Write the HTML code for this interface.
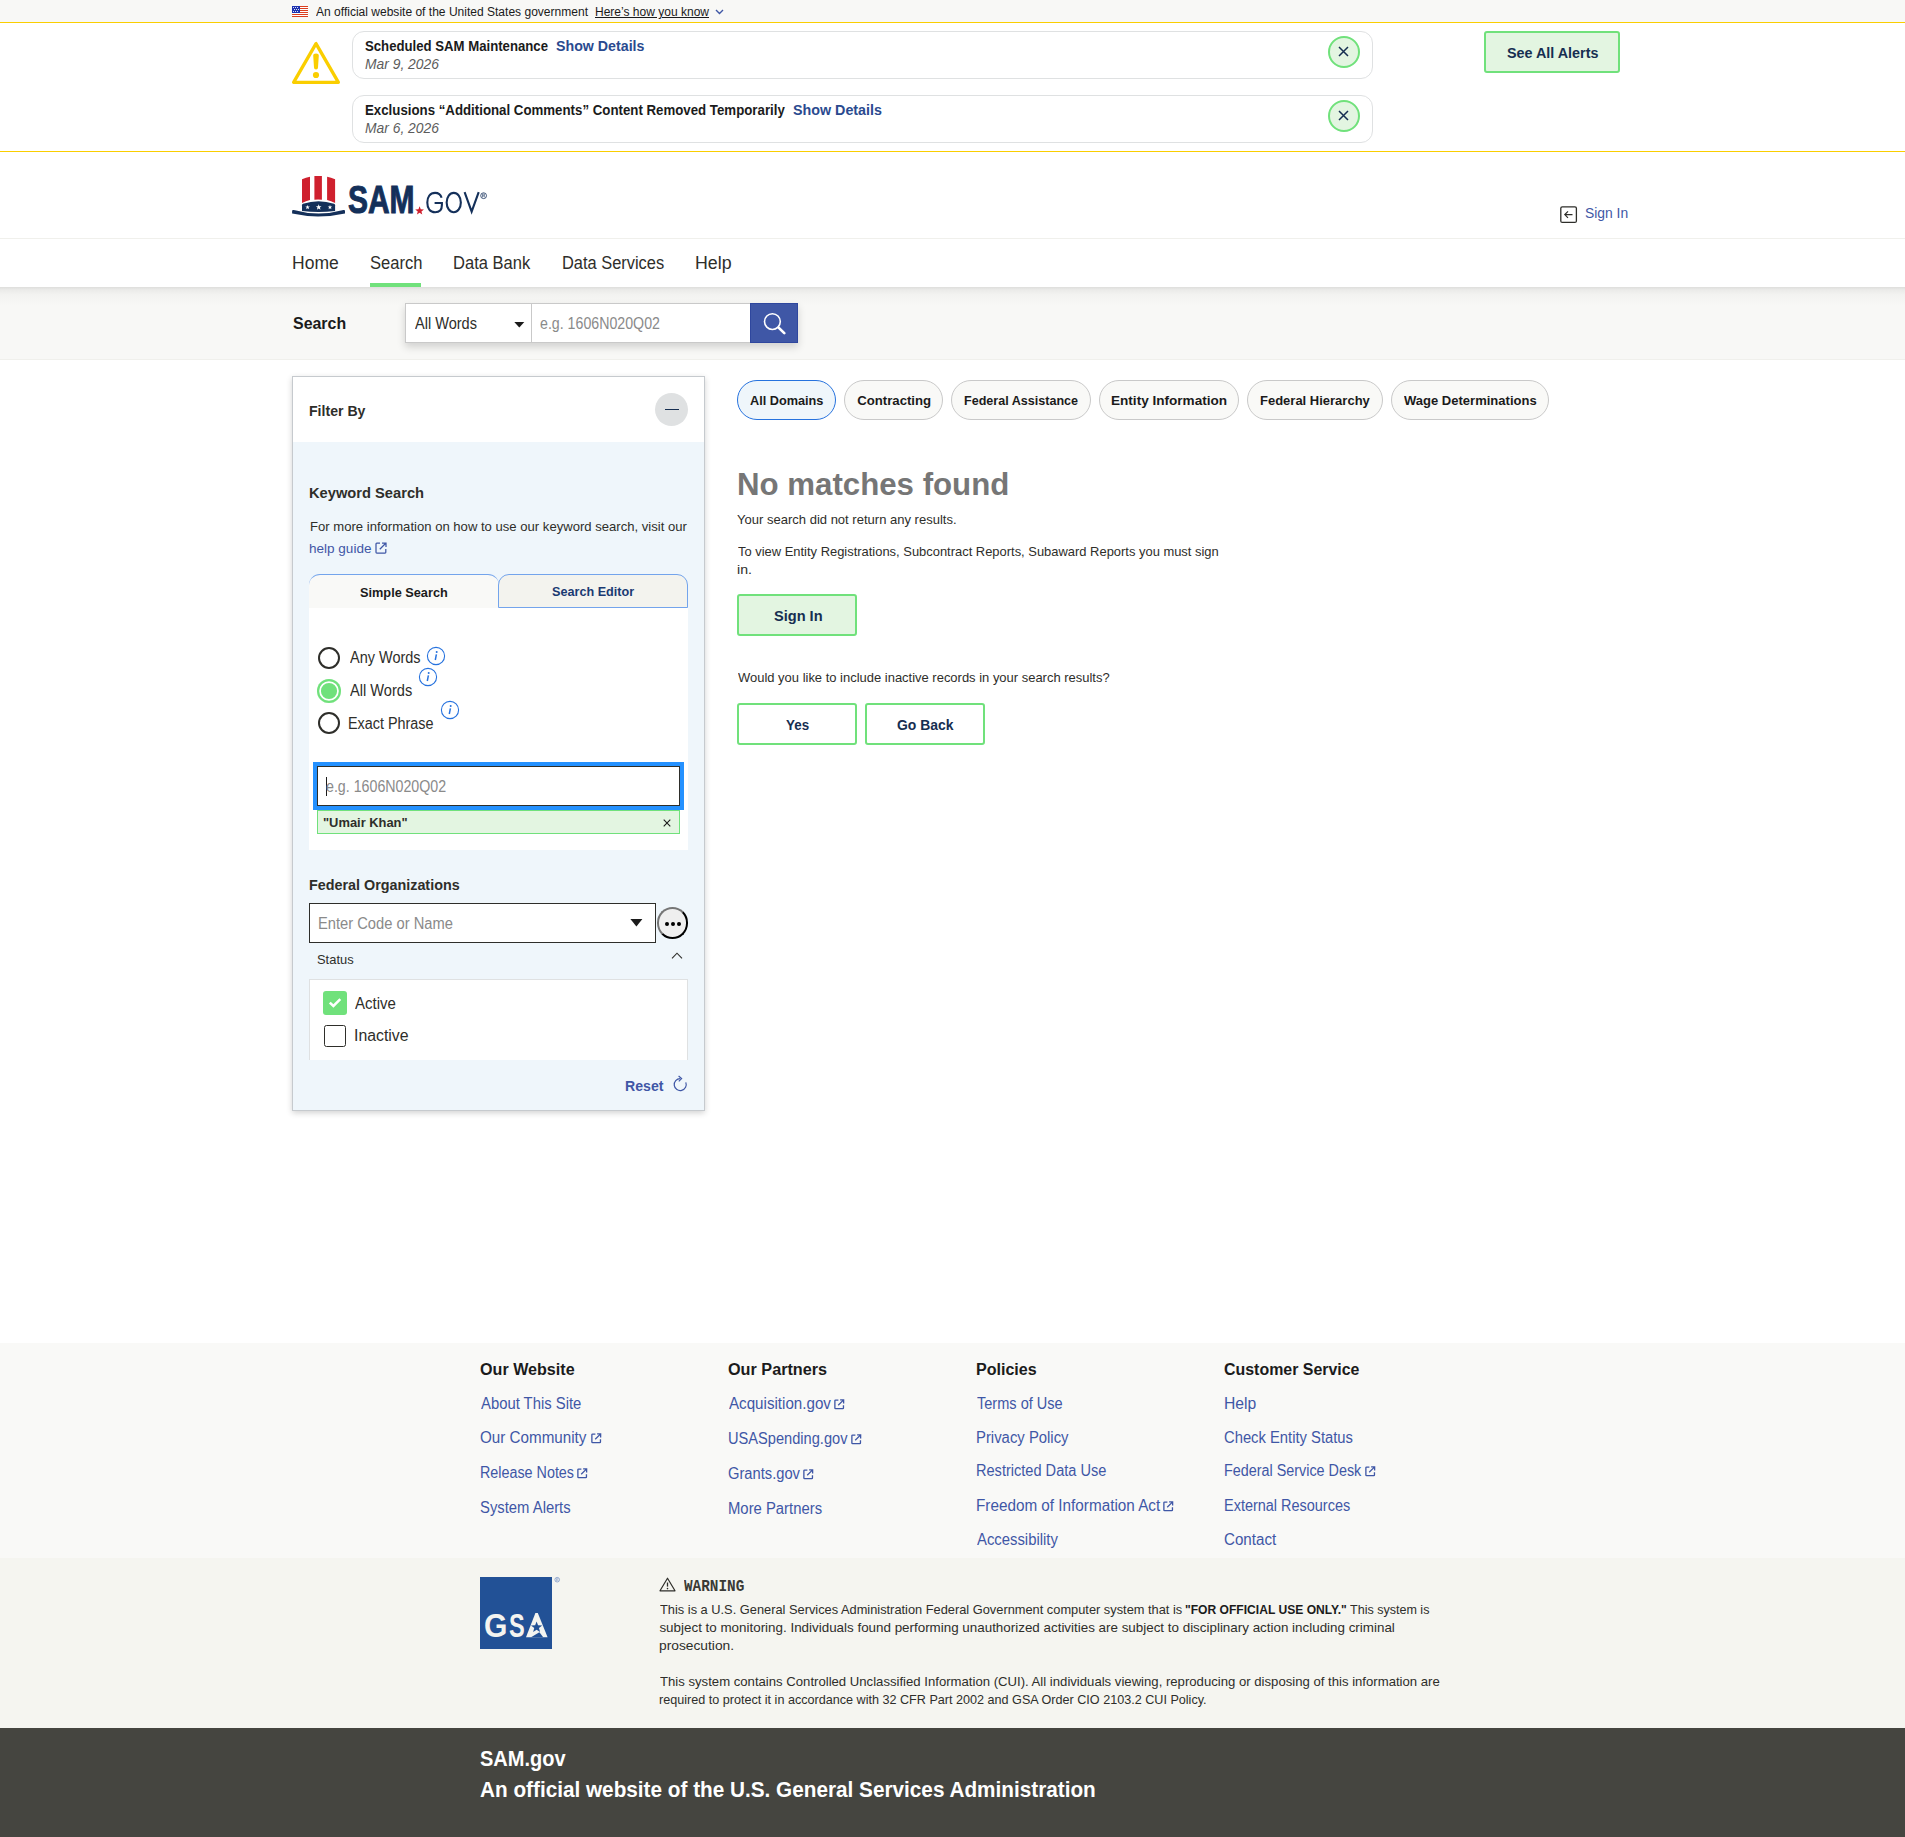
<!DOCTYPE html>
<html lang="en"><head><meta charset="utf-8"><title>SAM.gov | Search</title>
<style>
html,body{margin:0;padding:0}
body{width:1905px;height:1837px;position:relative;overflow:hidden;background:#fff;font-family:"Liberation Sans",sans-serif;}
.t{position:absolute;white-space:pre;line-height:normal;transform-origin:0 0;display:block}
.b{position:absolute;box-sizing:border-box}
svg{position:absolute;overflow:visible}
</style></head>
<body>
<div class="b" style="left:0;top:0;width:1905px;height:22px;background:#f8f8f6"></div>
<svg style="left:292px;top:6px" width="16" height="11" viewBox="0 0 16 11"><rect width="16" height="11" fill="#fff"/><rect x="0" y="0" width="16" height="1" fill="#db3e1f"/><rect x="0" y="2" width="16" height="1" fill="#db3e1f"/><rect x="0" y="4" width="16" height="1" fill="#db3e1f"/><rect x="0" y="6" width="16" height="1" fill="#db3e1f"/><rect x="0" y="8" width="16" height="1" fill="#db3e1f"/><rect x="0" y="10" width="16" height="1" fill="#db3e1f"/><rect x="0" y="0" width="8" height="7" fill="#1e33b1"/><circle cx="1.5" cy="1.5" r="0.55" fill="#fff"/><circle cx="3.5" cy="1.5" r="0.55" fill="#fff"/><circle cx="5.5" cy="1.5" r="0.55" fill="#fff"/><circle cx="2.5" cy="3.5" r="0.55" fill="#fff"/><circle cx="4.5" cy="3.5" r="0.55" fill="#fff"/><circle cx="6.5" cy="3.5" r="0.55" fill="#fff"/><circle cx="1.5" cy="5.5" r="0.55" fill="#fff"/><circle cx="3.5" cy="5.5" r="0.55" fill="#fff"/><circle cx="5.5" cy="5.5" r="0.55" fill="#fff"/></svg>
<span class="t" style="left:316.10px;top:3px;line-height:18px;font-size:12.3px;color:#1b1b1b;transform:scaleX(0.9785);">An official website of the United States government</span>
<span class="t" style="left:594.94px;top:3px;line-height:18px;font-size:12.3px;color:#1b1b1b;text-decoration:underline;transform:scaleX(0.9772);">Here’s how you know</span>
<svg style="left:715px;top:9px" width="9" height="6" viewBox="0 0 9 6"><path d="M1 1 L4.5 4.5 L8 1" fill="none" stroke="#3f57a6" stroke-width="1.4"/></svg>
<div class="b" style="left:0;top:22px;width:1905px;height:130px;background:#fff;border-top:1.5px solid #face00;border-bottom:1.5px solid #face00"></div>
<svg style="left:288px;top:38px" width="56" height="50" viewBox="288 38 56 50"><path d="M316 43.6 L293.6 82.3 L338.4 82.3 Z" fill="none" stroke="#face00" stroke-width="3.3" stroke-linejoin="round"/><path d="M313.2 55.6 a2.8 2.2 0 0 1 5.6 0 L318 67.5 a2 2 0 0 1 -4 0 Z" fill="#face00"/><circle cx="316" cy="75" r="3.1" fill="#face00"/></svg>
<div class="b" style="left:352px;top:31px;width:1021px;height:48px;border:1px solid #dfe1e2;border-radius:12px;background:#fff"></div>
<span class="t" style="left:365.44px;top:36px;line-height:20px;font-size:14.8px;color:#1b1b1b;font-weight:700;transform:scaleX(0.8902);">Scheduled SAM Maintenance</span>
<span class="t" style="left:556.41px;top:36px;line-height:20px;font-size:14.8px;color:#2a4a8f;font-weight:700;transform:scaleX(0.9602);">Show Details</span>
<span class="t" style="left:365.38px;top:54px;line-height:20px;font-size:14.8px;color:#5c5c5c;font-style:italic;transform:scaleX(0.9357);">Mar 9, 2026</span>
<div class="b" style="left:1327.5px;top:36px;width:32px;height:32px;border-radius:50%;border:2px solid #70e17b;background:#e3f5e1"></div>
<svg style="left:1338px;top:45.7px" width="11" height="11" viewBox="0 0 11 11"><path d="M1 1 L10 10 M10 1 L1 10" stroke="#162e51" stroke-width="1.5" fill="none"/></svg>
<div class="b" style="left:352px;top:95px;width:1021px;height:48px;border:1px solid #dfe1e2;border-radius:12px;background:#fff"></div>
<span class="t" style="left:364.94px;top:100px;line-height:20px;font-size:14.8px;color:#1b1b1b;font-weight:700;transform:scaleX(0.8963);">Exclusions “Additional Comments” Content Removed Temporarily</span>
<span class="t" style="left:792.91px;top:100px;line-height:20px;font-size:14.8px;color:#2a4a8f;font-weight:700;transform:scaleX(0.9656);">Show Details</span>
<span class="t" style="left:365.38px;top:118px;line-height:20px;font-size:14.8px;color:#5c5c5c;font-style:italic;transform:scaleX(0.9357);">Mar 6, 2026</span>
<div class="b" style="left:1327.5px;top:100px;width:32px;height:32px;border-radius:50%;border:2px solid #70e17b;background:#e3f5e1"></div>
<svg style="left:1338px;top:109.7px" width="11" height="11" viewBox="0 0 11 11"><path d="M1 1 L10 10 M10 1 L1 10" stroke="#162e51" stroke-width="1.5" fill="none"/></svg>
<div class="b" style="left:1484px;top:31px;width:136px;height:41.5px;border:2px solid #70e17b;background:#e3f5e1;border-radius:3px"></div>
<span class="t" style="left:1506.91px;top:43px;line-height:20px;font-size:14.8px;color:#162e51;font-weight:700;transform:scaleX(0.9695);">See All Alerts</span>
<div class="b" style="left:0;top:237.5px;width:1905px;height:1px;background:#f0f0ec"></div>
<svg style="left:1560px;top:206px" width="18" height="18" viewBox="0 0 18 18"><rect x="0.8" y="0.8" width="15.6" height="15.6" rx="1.5" fill="none" stroke="#2e2e2a" stroke-width="1.3"/><path d="M12.5 8.6 H5 M8 5.4 L4.8 8.6 L8 11.8" fill="none" stroke="#2e2e2a" stroke-width="1.2"/></svg>
<span class="t" style="left:1585.48px;top:203px;line-height:20px;font-size:14.8px;color:#3f57a6;transform:scaleX(0.9376);">Sign In</span>
<span class="t" style="left:292.10px;top:251px;line-height:24px;font-size:17.5px;color:#2e2e2a;">Home</span>
<span class="t" style="left:370.05px;top:251px;line-height:24px;font-size:17.5px;color:#2e2e2a;transform:scaleX(0.9468);">Search</span>
<span class="t" style="left:453.28px;top:251px;line-height:24px;font-size:17.5px;color:#2e2e2a;transform:scaleX(0.9444);">Data Bank</span>
<span class="t" style="left:562.39px;top:251px;line-height:24px;font-size:17.5px;color:#2e2e2a;transform:scaleX(0.9371);">Data Services</span>
<span class="t" style="left:695.18px;top:251px;line-height:24px;font-size:17.5px;color:#2e2e2a;transform:scaleX(1.0159);">Help</span>
<div class="b" style="left:370px;top:283px;width:51px;height:4px;background:#70e17b"></div>
<div class="b" style="left:0;top:287px;width:1905px;height:72.5px;background:linear-gradient(to bottom,#dededc 0,#ebebe9 3px,#f3f3f1 8px,#f8f8f6 18px,#f8f8f6 100%);border-bottom:1px solid #f0f0ec"></div>
<span class="t" style="left:293.06px;top:312px;line-height:23px;font-size:16.8px;color:#1b1b1b;font-weight:700;transform:scaleX(0.9494);">Search</span>
<div class="b" style="left:405px;top:303px;width:393px;height:40px;box-shadow:0 4px 8px rgba(0,0,0,.16)"></div>
<div class="b" style="left:405px;top:303px;width:126.5px;height:40px;background:#fff;border:1px solid #c9c9c9"></div>
<div class="b" style="left:530.5px;top:303px;width:220px;height:40px;background:#fff;border:1px solid #c9c9c9"></div>
<span class="t" style="left:415.10px;top:313px;line-height:21px;font-size:15.6px;color:#2e2e2a;transform:scaleX(0.9331);">All Words</span>
<svg style="left:513.6px;top:321.6px" width="11" height="6" viewBox="0 0 11 6"><path d="M0.3 0 H10.3 L5.3 5.6 Z" fill="#1b1b1b"/></svg>
<span class="t" style="left:540.30px;top:313px;line-height:21px;font-size:15.6px;color:#8a8a8a;transform:scaleX(0.9102);">e.g. 1606N020Q02</span>
<div class="b" style="left:750px;top:303px;width:48px;height:40px;background:#3f57a6;border:1px solid #2f479e"></div>
<svg style="left:760px;top:310px" width="28" height="28" viewBox="760 310 28 28"><circle cx="772.4" cy="321.6" r="7.9" fill="none" stroke="#fff" stroke-width="1.6"/><path d="M778.6 327.6 L784.3 333.1" stroke="#fff" stroke-width="2.7" stroke-linecap="round"/></svg>
<div class="b" style="left:292px;top:375.7px;width:413px;height:735.3px;background:#eff6fb;border:1px solid #c6cace;box-shadow:0 2px 6px rgba(0,0,0,.18)"></div>
<div class="b" style="left:293px;top:376.7px;width:411px;height:65.3px;background:#fff"></div>
<span class="t" style="left:308.88px;top:401px;line-height:20px;font-size:14.8px;color:#2e2e2a;font-weight:700;transform:scaleX(0.9536);">Filter By</span>
<div class="b" style="left:655px;top:393px;width:33px;height:33px;border-radius:50%;background:#dfe1e2"></div>
<div class="b" style="left:664.5px;top:408.6px;width:14px;height:1.4px;background:#162e51"></div>
<span class="t" style="left:308.85px;top:483px;line-height:20px;font-size:14.8px;color:#2e2e2a;font-weight:700;transform:scaleX(0.9920);">Keyword Search</span>
<span class="t" style="left:309.55px;top:517px;line-height:19px;font-size:13.4px;color:#2e2e2a;transform:scaleX(0.9776);">For more information on how to use our keyword search, visit our</span>
<span class="t" style="left:308.89px;top:539px;line-height:19px;font-size:13.4px;color:#3f57a6;transform:scaleX(1.0105);">help guide</span>
<svg style="left:374.8px;top:542.3px" width="12" height="12" viewBox="0 0 12 12"><path d="M5 1.2 H1.8 a0.8 0.8 0 0 0 -0.8 0.8 V10.2 a0.8 0.8 0 0 0 0.8 0.8 H10 a0.8 0.8 0 0 0 0.8 -0.8 V7" fill="none" stroke="#3f57a6" stroke-width="1.25"/><path d="M7 1 H11 V5 M11 1 L4.8 7.2" fill="none" stroke="#3f57a6" stroke-width="1.25"/></svg>
<div class="b" style="left:309px;top:574px;width:189.5px;height:34.2px;background:#f9f9f7;border-top:1px solid #73a4ec;border-radius:11px 11px 0 0"></div>
<div class="b" style="left:498.2px;top:574px;width:189.8px;height:34px;background:#f3f3ee;border:1px solid #73a4ec;border-radius:11px 11px 0 0"></div>
<span class="t" style="left:359.95px;top:583px;line-height:19px;font-size:13.4px;color:#1b1b1b;font-weight:700;transform:scaleX(0.9508);">Simple Search</span>
<span class="t" style="left:552.35px;top:582px;line-height:19px;font-size:13.4px;color:#1a3a72;font-weight:700;transform:scaleX(0.9438);">Search Editor</span>
<div class="b" style="left:309px;top:608px;width:379px;height:241.5px;background:#fff"></div>
<div class="b" style="left:318px;top:647px;width:22px;height:22px;border-radius:50%;background:#fff;border:2px solid #2e2e2a"></div>
<div class="b" style="left:317px;top:679px;width:24px;height:24px;border-radius:50%;background:#70e17b;box-shadow:inset 0 0 0 2.2px #70e17b, inset 0 0 0 3.9px #fff"></div>
<div class="b" style="left:318px;top:712px;width:22px;height:22px;border-radius:50%;background:#fff;border:2px solid #2e2e2a"></div>
<span class="t" style="left:349.60px;top:647px;line-height:21px;font-size:15.6px;color:#2e2e2a;transform:scaleX(0.9289);">Any Words</span>
<span class="t" style="left:349.60px;top:680px;line-height:21px;font-size:15.6px;color:#2e2e2a;transform:scaleX(0.9361);">All Words</span>
<span class="t" style="left:348.45px;top:713px;line-height:21px;font-size:15.6px;color:#2e2e2a;transform:scaleX(0.9215);">Exact Phrase</span>
<svg style="left:426.1px;top:646px" width="20" height="20" viewBox="0 0 20 20"><circle cx="10" cy="10" r="8.6" fill="none" stroke="#2672de" stroke-width="1.1"/><circle cx="10.7" cy="6" r="1" fill="#2672de"/><path d="M10.4 8.4 L9.3 14" stroke="#2672de" stroke-width="1.5" fill="none"/></svg>
<svg style="left:418px;top:667.2px" width="20" height="20" viewBox="0 0 20 20"><circle cx="10" cy="10" r="8.6" fill="none" stroke="#2672de" stroke-width="1.1"/><circle cx="10.7" cy="6" r="1" fill="#2672de"/><path d="M10.4 8.4 L9.3 14" stroke="#2672de" stroke-width="1.5" fill="none"/></svg>
<svg style="left:440px;top:700px" width="20" height="20" viewBox="0 0 20 20"><circle cx="10" cy="10" r="8.6" fill="none" stroke="#2672de" stroke-width="1.1"/><circle cx="10.7" cy="6" r="1" fill="#2672de"/><path d="M10.4 8.4 L9.3 14" stroke="#2672de" stroke-width="1.5" fill="none"/></svg>
<div class="b" style="left:313px;top:762px;width:371px;height:48px;background:#fff;border:4px solid #2491ff"></div>
<div class="b" style="left:317px;top:766px;width:363px;height:40px;border:1px solid #2e2e2a"></div>
<div class="b" style="left:325.8px;top:776.5px;width:1px;height:19px;background:#1b1b1b"></div>
<span class="t" style="left:326.30px;top:776px;line-height:21px;font-size:15.6px;color:#8a8a8a;transform:scaleX(0.9117);">e.g. 1606N020Q02</span>
<div class="b" style="left:317px;top:810px;width:363px;height:24px;background:#e3f5e1;border:1px solid #70e17b"></div>
<span class="t" style="left:322.96px;top:813px;line-height:19px;font-size:13.4px;color:#2e2e2a;font-weight:700;transform:scaleX(0.9629);">"Umair Khan"</span>
<svg style="left:663px;top:819px" width="8" height="8" viewBox="0 0 8 8"><path d="M0.7 0.7 L7.3 7.3 M7.3 0.7 L0.7 7.3" stroke="#1b1b1b" stroke-width="1.1" fill="none"/></svg>
<span class="t" style="left:308.87px;top:875px;line-height:20px;font-size:14.8px;color:#2e2e2a;font-weight:700;transform:scaleX(0.9693);">Federal Organizations</span>
<div class="b" style="left:309px;top:903.3px;width:347px;height:39.5px;background:#fff;border:1px solid #2e2e2a"></div>
<span class="t" style="left:317.72px;top:913px;line-height:21px;font-size:15.6px;color:#8a8a8a;transform:scaleX(0.9430);">Enter Code or Name</span>
<svg style="left:629.5px;top:919px" width="13" height="8" viewBox="0 0 13 8"><path d="M0.4 0 H12.4 L6.4 7.6 Z" fill="#1b1b1b"/></svg>
<div class="b" style="left:656.9px;top:907.2px;width:31px;height:31.4px;border-radius:50%;background:#efefef;border:2px solid;border-color:#767676 #000 #000 #767676"></div>
<div class="b" style="left:665.35px;top:922.25px;width:3.9px;height:3.9px;border-radius:50%;background:#000"></div>
<div class="b" style="left:671.25px;top:922.25px;width:3.9px;height:3.9px;border-radius:50%;background:#000"></div>
<div class="b" style="left:677.15px;top:922.25px;width:3.9px;height:3.9px;border-radius:50%;background:#000"></div>
<span class="t" style="left:317.12px;top:950px;line-height:19px;font-size:13.4px;color:#2e2e2a;transform:scaleX(0.9643);">Status</span>
<svg style="left:671px;top:951.5px" width="12" height="7" viewBox="0 0 12 7"><path d="M1 6.3 L6 1.2 L11 6.3" fill="none" stroke="#2e2e2a" stroke-width="1.1"/></svg>
<div class="b" style="left:309px;top:979px;width:379px;height:81px;background:#fff;border:1.5px solid #dfe1e2;border-bottom:none"></div>
<div class="b" style="left:323px;top:991px;width:24px;height:24px;border-radius:3px;background:#70e17b"></div>
<svg style="left:323px;top:991px" width="24" height="24" viewBox="0 0 24 24"><path d="M6.8 11.6 L10.4 15 L17.3 8.2" fill="none" stroke="#fff" stroke-width="2.5"/></svg>
<span class="t" style="left:355.30px;top:993px;line-height:21px;font-size:15.6px;color:#2e2e2a;transform:scaleX(0.9615);">Active</span>
<div class="b" style="left:324px;top:1025px;width:22px;height:22px;border-radius:2.5px;background:#fff;border:1.5px solid #2e2e2a"></div>
<span class="t" style="left:353.87px;top:1025px;line-height:21px;font-size:15.6px;color:#2e2e2a;transform:scaleX(1.0160);">Inactive</span>
<span class="t" style="left:624.78px;top:1076px;line-height:20px;font-size:14.8px;color:#3f57a6;font-weight:700;transform:scaleX(0.9545);">Reset</span>
<svg style="left:672px;top:1075px" width="16" height="18" viewBox="0 0 16 18"><path d="M8.2 3.6 A6 6 0 1 0 13.8 7.4" fill="none" stroke="#3f57a6" stroke-width="1.2"/><path d="M6.6 1 L9.6 3.6 L6.8 6.4" fill="none" stroke="#3f57a6" stroke-width="1.2"/></svg>
<div class="b" style="left:737px;top:380px;width:98.5px;height:39.5px;border-radius:20px;background:#eff6fb;border:1px solid #2672de"></div>
<span class="t" style="left:750.28px;top:391px;line-height:19px;font-size:13.2px;color:#1b1b1b;font-weight:700;transform:scaleX(0.9637);">All Domains</span>
<div class="b" style="left:844.2px;top:380px;width:98.5px;height:39.5px;border-radius:20px;background:#f9f9f7;border:1px solid #c9c9c9"></div>
<span class="t" style="left:857.17px;top:391px;line-height:19px;font-size:13.2px;color:#1b1b1b;font-weight:700;">Contracting</span>
<div class="b" style="left:951.1px;top:380px;width:139.8px;height:39.5px;border-radius:20px;background:#f9f9f7;border:1px solid #c9c9c9"></div>
<span class="t" style="left:963.78px;top:391px;line-height:19px;font-size:13.2px;color:#1b1b1b;font-weight:700;transform:scaleX(0.9525);">Federal Assistance</span>
<div class="b" style="left:1099.1px;top:380px;width:139.7px;height:39.5px;border-radius:20px;background:#f9f9f7;border:1px solid #c9c9c9"></div>
<span class="t" style="left:1111.12px;top:391px;line-height:19px;font-size:13.2px;color:#1b1b1b;font-weight:700;transform:scaleX(1.0290);">Entity Information</span>
<div class="b" style="left:1247.2px;top:380px;width:135.7px;height:39.5px;border-radius:20px;background:#f9f9f7;border:1px solid #c9c9c9"></div>
<span class="t" style="left:1259.95px;top:391px;line-height:19px;font-size:13.2px;color:#1b1b1b;font-weight:700;transform:scaleX(0.9854);">Federal Hierarchy</span>
<div class="b" style="left:1391px;top:380px;width:157.9px;height:39.5px;border-radius:20px;background:#f9f9f7;border:1px solid #c9c9c9"></div>
<span class="t" style="left:1403.60px;top:391px;line-height:19px;font-size:13.2px;color:#1b1b1b;font-weight:700;transform:scaleX(0.9877);">Wage Determinations</span>
<span class="t" style="left:736.77px;top:465px;line-height:38px;font-size:30.6px;color:#767676;font-weight:700;transform:scaleX(1.0204);">No matches found</span>
<span class="t" style="left:737.34px;top:510px;line-height:19px;font-size:13.4px;color:#2e2e2a;transform:scaleX(0.9725);">Your search did not return any results.</span>
<span class="t" style="left:737.54px;top:542px;line-height:19px;font-size:13.4px;color:#2e2e2a;transform:scaleX(0.9655);">To view Entity Registrations, Subcontract Reports, Subaward Reports you must sign</span>
<span class="t" style="left:736.88px;top:560px;line-height:19px;font-size:13.4px;color:#2e2e2a;transform:scaleX(1.0531);">in.</span>
<div class="b" style="left:737px;top:594px;width:120px;height:41.7px;border:2px solid #70e17b;background:#e3f5e1;border-radius:3px"></div>
<span class="t" style="left:773.60px;top:606px;line-height:20px;font-size:14.8px;color:#162e51;font-weight:700;transform:scaleX(0.9849);">Sign In</span>
<span class="t" style="left:737.87px;top:668px;line-height:19px;font-size:13.4px;color:#2e2e2a;transform:scaleX(0.9683);">Would you like to include inactive records in your search results?</span>
<div class="b" style="left:737px;top:703px;width:120px;height:41.7px;border:2px solid #70e17b;background:#fff;border-radius:3px"></div>
<span class="t" style="left:786.40px;top:715px;line-height:20px;font-size:14.8px;color:#162e51;font-weight:700;transform:scaleX(0.9063);">Yes</span>
<div class="b" style="left:865px;top:703px;width:120px;height:41.7px;border:2px solid #70e17b;background:#fff;border-radius:3px"></div>
<span class="t" style="left:897.24px;top:715px;line-height:20px;font-size:14.8px;color:#162e51;font-weight:700;transform:scaleX(0.9418);">Go Back</span>
<div class="b" style="left:0;top:1342.5px;width:1905px;height:215.5px;background:#f9f9f7"></div>
<div class="b" style="left:0;top:1558px;width:1905px;height:170px;background:#f5f5f0"></div>
<div class="b" style="left:0;top:1727.7px;width:1905px;height:109.3px;background:#454540"></div>
<span class="t" style="left:480.15px;top:1357px;line-height:24px;font-size:17.2px;color:#1b1b1b;font-weight:700;transform:scaleX(0.9377);">Our Website</span>
<span class="t" style="left:728.15px;top:1357px;line-height:24px;font-size:17.2px;color:#1b1b1b;font-weight:700;transform:scaleX(0.9431);">Our Partners</span>
<span class="t" style="left:975.76px;top:1357px;line-height:24px;font-size:17.2px;color:#1b1b1b;font-weight:700;transform:scaleX(0.9343);">Policies</span>
<span class="t" style="left:1224.26px;top:1357px;line-height:24px;font-size:17.2px;color:#1b1b1b;font-weight:700;transform:scaleX(0.9269);">Customer Service</span>
<span class="t" style="left:480.80px;top:1393px;line-height:21px;font-size:15.6px;color:#3f57a6;transform:scaleX(0.9510);">About This Site</span>
<span class="t" style="left:480.12px;top:1427px;line-height:21px;font-size:15.6px;color:#3f57a6;transform:scaleX(0.9748);">Our Community</span>
<svg style="left:590.5px;top:1433.3000000000002px" width="10.5" height="10.5" viewBox="0 0 12 12"><path d="M5 1.2 H1.8 a0.8 0.8 0 0 0 -0.8 0.8 V10.2 a0.8 0.8 0 0 0 0.8 0.8 H10 a0.8 0.8 0 0 0 0.8 -0.8 V7" fill="none" stroke="#3f57a6" stroke-width="1.5"/><path d="M7 1 H11 V5 M11 1 L4.8 7.2" fill="none" stroke="#3f57a6" stroke-width="1.5"/></svg>
<span class="t" style="left:479.65px;top:1462px;line-height:21px;font-size:15.6px;color:#3f57a6;transform:scaleX(0.9190);">Release Notes</span>
<svg style="left:576.8px;top:1468.2px" width="10.5" height="10.5" viewBox="0 0 12 12"><path d="M5 1.2 H1.8 a0.8 0.8 0 0 0 -0.8 0.8 V10.2 a0.8 0.8 0 0 0 0.8 0.8 H10 a0.8 0.8 0 0 0 0.8 -0.8 V7" fill="none" stroke="#3f57a6" stroke-width="1.5"/><path d="M7 1 H11 V5 M11 1 L4.8 7.2" fill="none" stroke="#3f57a6" stroke-width="1.5"/></svg>
<span class="t" style="left:480.13px;top:1497px;line-height:21px;font-size:15.6px;color:#3f57a6;transform:scaleX(0.9510);">System Alerts</span>
<span class="t" style="left:728.80px;top:1393px;line-height:21px;font-size:15.6px;color:#3f57a6;transform:scaleX(0.9713);">Acquisition.gov</span>
<svg style="left:834.3px;top:1399.2px" width="10.5" height="10.5" viewBox="0 0 12 12"><path d="M5 1.2 H1.8 a0.8 0.8 0 0 0 -0.8 0.8 V10.2 a0.8 0.8 0 0 0 0.8 0.8 H10 a0.8 0.8 0 0 0 0.8 -0.8 V7" fill="none" stroke="#3f57a6" stroke-width="1.5"/><path d="M7 1 H11 V5 M11 1 L4.8 7.2" fill="none" stroke="#3f57a6" stroke-width="1.5"/></svg>
<span class="t" style="left:727.70px;top:1428px;line-height:21px;font-size:15.6px;color:#3f57a6;transform:scaleX(0.9376);">USASpending.gov</span>
<svg style="left:850.8px;top:1434.4px" width="10.5" height="10.5" viewBox="0 0 12 12"><path d="M5 1.2 H1.8 a0.8 0.8 0 0 0 -0.8 0.8 V10.2 a0.8 0.8 0 0 0 0.8 0.8 H10 a0.8 0.8 0 0 0 0.8 -0.8 V7" fill="none" stroke="#3f57a6" stroke-width="1.5"/><path d="M7 1 H11 V5 M11 1 L4.8 7.2" fill="none" stroke="#3f57a6" stroke-width="1.5"/></svg>
<span class="t" style="left:728.06px;top:1463px;line-height:21px;font-size:15.6px;color:#3f57a6;transform:scaleX(0.9430);">Grants.gov</span>
<svg style="left:803.3px;top:1469.3000000000002px" width="10.5" height="10.5" viewBox="0 0 12 12"><path d="M5 1.2 H1.8 a0.8 0.8 0 0 0 -0.8 0.8 V10.2 a0.8 0.8 0 0 0 0.8 0.8 H10 a0.8 0.8 0 0 0 0.8 -0.8 V7" fill="none" stroke="#3f57a6" stroke-width="1.5"/><path d="M7 1 H11 V5 M11 1 L4.8 7.2" fill="none" stroke="#3f57a6" stroke-width="1.5"/></svg>
<span class="t" style="left:727.61px;top:1498px;line-height:21px;font-size:15.6px;color:#3f57a6;transform:scaleX(0.9523);">More Partners</span>
<span class="t" style="left:976.51px;top:1393px;line-height:21px;font-size:15.6px;color:#3f57a6;transform:scaleX(0.9328);">Terms of Use</span>
<span class="t" style="left:975.61px;top:1427px;line-height:21px;font-size:15.6px;color:#3f57a6;transform:scaleX(0.9535);">Privacy Policy</span>
<span class="t" style="left:975.63px;top:1460px;line-height:21px;font-size:15.6px;color:#3f57a6;transform:scaleX(0.9341);">Restricted Data Use</span>
<span class="t" style="left:975.58px;top:1495px;line-height:21px;font-size:15.6px;color:#3f57a6;transform:scaleX(0.9796);">Freedom of Information Act</span>
<svg style="left:1162.9px;top:1500.5px" width="10.5" height="10.5" viewBox="0 0 12 12"><path d="M5 1.2 H1.8 a0.8 0.8 0 0 0 -0.8 0.8 V10.2 a0.8 0.8 0 0 0 0.8 0.8 H10 a0.8 0.8 0 0 0 0.8 -0.8 V7" fill="none" stroke="#3f57a6" stroke-width="1.5"/><path d="M7 1 H11 V5 M11 1 L4.8 7.2" fill="none" stroke="#3f57a6" stroke-width="1.5"/></svg>
<span class="t" style="left:976.80px;top:1529px;line-height:21px;font-size:15.6px;color:#3f57a6;transform:scaleX(0.9524);">Accessibility</span>
<span class="t" style="left:1223.64px;top:1393px;line-height:21px;font-size:15.6px;color:#3f57a6;transform:scaleX(1.0071);">Help</span>
<span class="t" style="left:1224.16px;top:1427px;line-height:21px;font-size:15.6px;color:#3f57a6;transform:scaleX(0.9479);">Check Entity Status</span>
<span class="t" style="left:1223.75px;top:1460px;line-height:21px;font-size:15.6px;color:#3f57a6;transform:scaleX(0.9207);">Federal Service Desk</span>
<svg style="left:1364.5px;top:1466.4px" width="10.5" height="10.5" viewBox="0 0 12 12"><path d="M5 1.2 H1.8 a0.8 0.8 0 0 0 -0.8 0.8 V10.2 a0.8 0.8 0 0 0 0.8 0.8 H10 a0.8 0.8 0 0 0 0.8 -0.8 V7" fill="none" stroke="#3f57a6" stroke-width="1.5"/><path d="M7 1 H11 V5 M11 1 L4.8 7.2" fill="none" stroke="#3f57a6" stroke-width="1.5"/></svg>
<span class="t" style="left:1223.74px;top:1495px;line-height:21px;font-size:15.6px;color:#3f57a6;transform:scaleX(0.9274);">External Resources</span>
<span class="t" style="left:1224.14px;top:1529px;line-height:21px;font-size:15.6px;color:#3f57a6;transform:scaleX(0.9719);">Contact</span>
<div class="b" style="left:480px;top:1577px;width:72px;height:71.7px;background:#225196"></div>
<span class="t" style="left:483.90px;top:1605px;line-height:41px;font-size:33.3px;color:#f4f4f0;font-weight:700;transform:scaleX(0.9042);">G</span>
<span class="t" style="left:509.35px;top:1605px;line-height:41px;font-size:33.3px;color:#f4f4f0;font-weight:700;transform:scaleX(0.7078);">S</span>
<svg style="left:524px;top:1610px" width="26" height="30" viewBox="524 1610 26 30"><path d="M526 1637.2 L535.4 1612.9 H537.8 L547.6 1637.2 Z" fill="#f4f4f0"/><polygon points="536.60,1621.40 538.06,1625.30 542.21,1625.48 538.96,1628.07 540.07,1632.07 536.60,1629.78 533.13,1632.07 534.24,1628.07 530.99,1625.48 535.14,1625.30" fill="#225196"/><path d="M531 1637.3 L539.4 1632.2 L543.2 1637.3 Z" fill="#225196"/><circle cx="557.2" cy="1579.7" r="2.3" fill="none" stroke="#7c97c6" stroke-width="0.8"/><path d="M556.5 1581 V1578.5 H557.5 Q558.1 1578.5 558.1 1579.2 Q558.1 1579.8 557.5 1579.8 H556.5 M557.4 1579.8 L558.2 1581" fill="none" stroke="#7c97c6" stroke-width="0.5"/></svg>
<svg style="left:658.5px;top:1577.4px" width="17" height="15" viewBox="0 0 17 15"><path d="M8.5 1.2 L1 13.8 H16 Z" fill="none" stroke="#2e2e2a" stroke-width="1.2" stroke-linejoin="round"/><path d="M8.5 5.5 V9.6" stroke="#2e2e2a" stroke-width="1.3"/><circle cx="8.5" cy="11.6" r="0.8" fill="#2e2e2a"/></svg>
<span class="t" style="left:683.60px;top:1576px;line-height:22px;font-size:15.6px;color:#3a3a36;font-weight:700;font-family:'Liberation Mono',monospace;transform:scaleX(0.9216);">WARNING</span>
<span class="t" style="left:659.54px;top:1600px;line-height:19px;font-size:13.4px;color:#2e2e2a;transform:scaleX(0.9573);">This is a U.S. General Services Administration Federal Government computer system that is</span>
<span class="t" style="left:1184.81px;top:1600px;line-height:19px;font-size:13.4px;color:#1b1b1b;font-weight:700;transform:scaleX(0.9024);">"FOR OFFICIAL USE ONLY."</span>
<span class="t" style="left:1350.05px;top:1600px;line-height:19px;font-size:13.4px;color:#2e2e2a;transform:scaleX(0.9364);">This system is</span>
<span class="t" style="left:659.43px;top:1618px;line-height:19px;font-size:13.4px;color:#2e2e2a;">subject to monitoring. Individuals found performing unauthorized activities are subject to disciplinary action including criminal</span>
<span class="t" style="left:658.94px;top:1636px;line-height:19px;font-size:13.4px;color:#2e2e2a;transform:scaleX(1.0289);">prosecution.</span>
<span class="t" style="left:659.54px;top:1672px;line-height:19px;font-size:13.4px;color:#2e2e2a;transform:scaleX(0.9810);">This system contains Controlled Unclassified Information (CUI). All individuals viewing, reproducing or disposing of this information are</span>
<span class="t" style="left:658.98px;top:1690px;line-height:19px;font-size:13.4px;color:#2e2e2a;transform:scaleX(0.9412);">required to protect it in accordance with 32 CFR Part 2002 and GSA Order CIO 2103.2 CUI Policy.</span>
<span class="t" style="left:480.25px;top:1744px;line-height:29px;font-size:22px;color:#fff;font-weight:700;transform:scaleX(0.9096);">SAM.gov</span>
<span class="t" style="left:480.08px;top:1775px;line-height:29px;font-size:22px;color:#fff;font-weight:700;transform:scaleX(0.9426);">An official website of the U.S. General Services Administration</span>
<svg style="left:288px;top:170px" width="210" height="52" viewBox="288 170 210 52"><path d="M302 179.3 Q306 177.4 310 176.7 V200 Q306 201 302 202.9 Z" fill="#cf202e"/><path d="M314.4 176 H321.9 V199.7 Q318 199.3 314.4 199.7 Z" fill="#cf202e"/><path d="M327.1 176.7 Q331 177.4 335.1 179.3 V202.9 Q331 201 327.1 200 Z" fill="#cf202e"/><path d="M302 205.2 Q302 204.2 303 203.8 Q318.5 198.6 334 203.8 Q335.1 204.2 335.1 205.2 V211 Q318.5 213 302 211 Z" fill="#14305a"/><polygon points="307.60,204.90 308.19,206.48 309.88,206.56 308.56,207.61 309.01,209.24 307.60,208.31 306.19,209.24 306.64,207.61 305.32,206.56 307.01,206.48" fill="#fff"/><polygon points="318.70,204.20 319.44,206.18 321.55,206.27 319.90,207.59 320.46,209.63 318.70,208.46 316.94,209.63 317.50,207.59 315.85,206.27 317.96,206.18" fill="#fff"/><polygon points="330.00,204.90 330.59,206.48 332.28,206.56 330.96,207.61 331.41,209.24 330.00,208.31 328.59,209.24 329.04,207.61 327.72,206.56 329.41,206.48" fill="#fff"/><path d="M292.1 210.6 Q292.6 209.6 293.8 210 Q318.5 217 343.4 210 Q344.8 209.6 345 210.8 V213.4 Q318.5 219.4 292.1 213.6 Z" fill="#14305a"/><polygon points="419.60,206.30 420.74,209.34 423.97,209.48 421.44,211.50 422.30,214.62 419.60,212.83 416.90,214.62 417.76,211.50 415.23,209.48 418.46,209.34" fill="#cf202e"/><path d="M441.6 197.8 C440.6 194.4 438.2 192.9 435.1 192.9 C430.1 192.9 427.3 197 427.3 202.6 C427.3 208.2 430.1 212.3 435.1 212.3 C439.6 212.3 441.9 209.4 441.9 205 V203 H434.6" fill="none" stroke="#14305a" stroke-width="2.1"/><ellipse cx="453.75" cy="202.6" rx="7.1" ry="9.7" fill="none" stroke="#14305a" stroke-width="2.1"/><path d="M464.6 192.1 L471.65 211.6 L478.7 192.1" fill="none" stroke="#14305a" stroke-width="2.1" stroke-linejoin="miter"/><circle cx="483.6" cy="195.7" r="2.9" fill="none" stroke="#14305a" stroke-width="0.8"/><path d="M482.6 197.3 V194.1 H483.8 Q484.7 194.1 484.7 195 Q484.7 195.8 483.8 195.8 H482.6 M483.8 195.8 L484.8 197.3" fill="none" stroke="#14305a" stroke-width="0.6"/></svg>
<span class="t" style="left:347.88px;top:176px;line-height:47px;font-size:38.4px;color:#14305a;font-weight:700;transform:scaleX(0.7800);-webkit-text-stroke:1px #14305a;">SAM</span>
</body></html>
